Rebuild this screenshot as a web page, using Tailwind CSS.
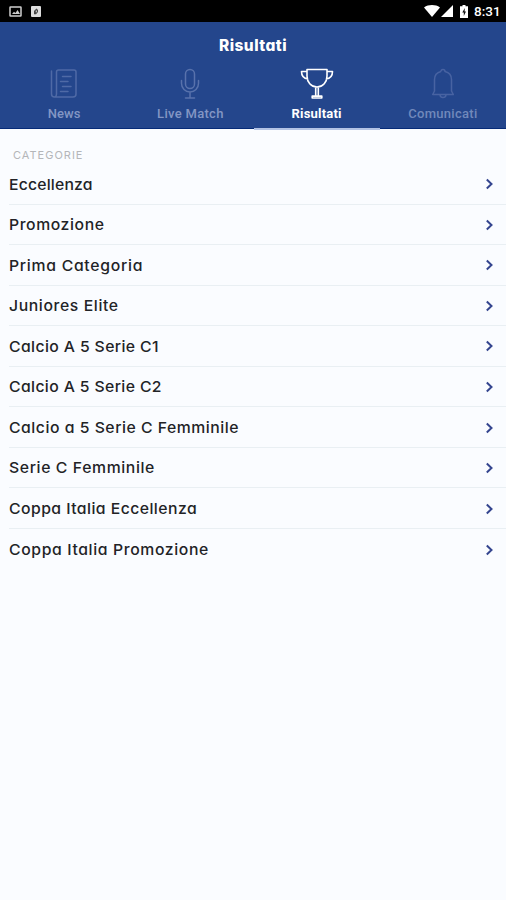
<!DOCTYPE html>
<html lang="it">
<head>
<meta charset="utf-8">
<title>Risultati</title>
<script src="https://cdn.jsdelivr.net/npm/@tailwindcss/browser@4"></script>
</head>
<body class="w-[506px] h-[900px] overflow-hidden bg-[#fafcff] font-['Inter',sans-serif]">
<div class="h-[22px] bg-black flex items-center justify-between pl-[9px] pr-[6px]">
  <div class="flex items-center gap-[9px]">
    <svg class="w-[13px] h-[11px]" viewBox="0 0 13 11"><rect x="1" y="1" width="11" height="9" rx=".5" fill="none" stroke="#cfcfcf" stroke-width="1.5"/><path d="M3 8l2-2.3 1.4 1.3L8.6 4 11 8z" fill="#cfcfcf"/></svg>
    <svg class="w-[10px] h-[11px]" viewBox="0 0 10 11"><rect width="10" height="11" rx="1" fill="#dcdcdc"/><path d="M3 8.3V5l2.4-2.5L7 4v2L5 8.3z" fill="#444"/><rect x="4.7" y="4.5" width="1.3" height="1.8" fill="#bbb"/></svg>
  </div>
  <div class="flex items-center">
    <svg class="w-[16px] h-[12px]" viewBox="0 0 16 12"><path d="M0 2.4C4.5-.8 11.500-.8 16 2.400L8 12z" fill="#fff"/></svg>
    <svg class="w-[12px] h-[12px] ml-px" viewBox="0 0 12 12"><path d="M12 0v12H0z" fill="#fff"/></svg>
    <svg class="w-[8px] h-[13px] ml-[7px]" viewBox="0 0 8 13"><path d="M2.500 0h3v1.300H8V13H0V1.300h2.500z" fill="#fff"/><path d="M4.800 3L2.300 7.500h1.500V11l2.200-4.500H4.600z" fill="#111"/></svg>
    <span class="ml-[6px] w-[26px] whitespace-nowrap text-[13.5px] leading-[22px] font-medium text-white font-['Roboto',sans-serif]">8:31</span>
  </div>
</div>
<header class="h-[107px] bg-[#24468c] flex flex-col">
  <h1 class="h-[46px] leading-[47px] text-center text-[15.500px] tracking-[0.45px] font-extrabold text-white [font-feature-settings:'cv11']">Risultati</h1>
  <nav class="grid grid-cols-4 h-[61px] pl-px text-[13px] tracking-[0.1px] font-medium font-['Roboto',sans-serif] border-b border-[#062b78]">
    <div class="flex flex-col items-center text-[#8396c4]">
      <svg class="w-[28px] h-[32px] text-[#4f6aa6]" viewBox="0 0 28 32" fill="none" stroke="currentColor" stroke-width="1.500"><path d="M6.500 4a2 2 0 0 1 2-2H24a2 2 0 0 1 2 2v22a3 3 0 0 1-3 3H4.500a3 3 0 0 1-3-3V3M6.500 4v22c0 1.500-.5 2.500-1.500 3M12.500 8.500H21M10.500 13.500H18M12.500 18.500H21M10.500 23.500H18" stroke-linecap="round"/></svg>
      <span class="leading-[28px]">News</span>
    </div>
    <div class="flex flex-col items-center text-[#8396c4]">
      <svg class="w-[20px] h-[32px] text-[#5872ac]" viewBox="0 0 20 32" fill="none" stroke="currentColor" stroke-width="1.500" stroke-linecap="round"><rect x="5.500" y="1.500" width="9" height="19" rx="4.500"/><path d="M1.500 12.500v3a8.500 8.500 0 0 0 17 0v-3M10 24v6M5.500 30h9"/></svg>
      <span class="leading-[28px] tracking-[0.3px]">Live Match</span>
    </div>
    <div class="flex flex-col items-center text-white border-b-2 border-[#b3c3e4]">
      <svg class="w-[34px] h-[32px] shrink-0" viewBox="0 0 34 32" fill="none" stroke="currentColor" stroke-width="1.600" stroke-linejoin="round"><path d="M7 1.500h20v6.500c0 6-4 11-10 11S7 14 7 8zM7 3.500H1.500c0 4.500 2.200 7 6.500 7.500M27 3.500h5.500c0 4.500-2.200 7-6.500 7.500M15.700 19v9M18.300 19v9M12.200 30v-1.900h9.600V30z"/></svg>
      <span class="leading-[28px] font-bold tracking-[0.2px]">Risultati</span>
    </div>
    <div class="flex flex-col items-center text-[#7189bb]">
      <svg class="w-[24px] h-[32px] text-[#4863a2]" viewBox="0 0 24 32" fill="none" stroke="currentColor" stroke-width="1.500" stroke-linejoin="round"><path d="M10 3.500a2 2 0 0 1 4 0c4 1 6.500 4 6.500 8V23l1.800 3.500H1.700L3.500 23V11.500c0-4 2.500-7 6.500-8M9 26.500a3 3 0 0 0 6 0"/></svg>
      <span class="leading-[28px] tracking-[0.3px]">Comunicati</span>
    </div>
  </nav>
</header>
<main>
  <h2 class="h-[35px] pl-[13px] pt-[16px] leading-[20px] text-[11px] tracking-[1px] text-[#b4b6b9]">CATEGORIE</h2>
  <ul id="list" class="text-[15px] font-medium text-[#222326] [font-feature-settings:'cv11']"></ul>
</main>
<script>
// Each row: label and its letter spacing in pixels.
const rows = [["Eccellenza",.18],["Promozione",.56],["Prima Categoria",.69],["Juniores Elite",.58],["Calcio A 5 Serie C1",.37],["Calcio A 5 Serie C2",.36],["Calcio a 5 Serie C Femminile",.5],["Serie C Femminile",.59],["Coppa Italia Eccellenza",.43],["Coppa Italia Promozione",.6]];
document.getElementById('list').innerHTML = rows.map(([t, s], i) => `<li class="h-[40.55px] ml-[9px] pr-[12px] flex items-center justify-between ${i < rows.length - 1 ? 'border-b border-[#e9eff3]' : ''}"><span class="whitespace-nowrap pt-[2px] origin-left scale-x-105" style="letter-spacing:${s}px">${t}</span><svg class="w-[9px] h-[12px] mt-[1px]" viewBox="0 0 9 12" fill="none" stroke="#34458f" stroke-width="2"><path d="M1.800 1.500L6.500 6l-4.700 4.500"/></svg></li>`).join('');
</script>
</body>
</html>
